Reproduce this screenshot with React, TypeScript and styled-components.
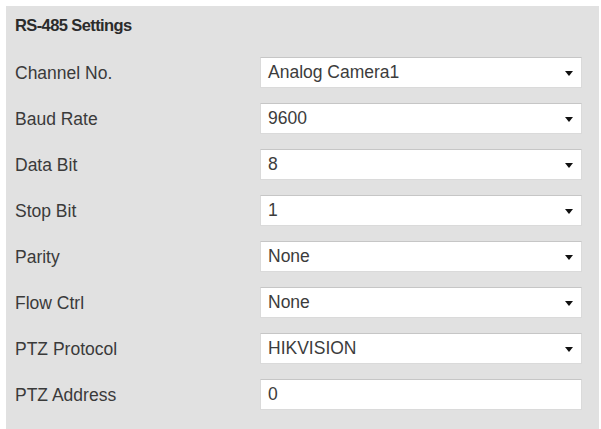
import React from "react";
import styled, { createGlobalStyle } from "styled-components";

const GlobalStyle = createGlobalStyle`
  html, body {
    margin: 0;
    padding: 0;
    background: #ffffff;
  }
  body {
    font-family: "Liberation Sans", Arial, sans-serif;
  }
`;

const Panel = styled.div`
  margin: 6px 2px 0 6px;
  height: 423px;
  box-sizing: border-box;
  padding: 0 0 0 9px;
  background: #e1e1e1;
`;

const Title = styled.div`
  height: 37px;
  line-height: 38px;
  font-size: 16.5px;
  font-weight: bold;
  letter-spacing: -0.6px;
  color: #2b2b2b;
`;

const Form = styled.div`
  margin-top: 14px;
  display: grid;
  grid-template-columns: 245px 322px;
  row-gap: 15px;
`;

const Label = styled.div`
  height: 31px;
  line-height: 33px;
  font-size: 17.5px;
  color: #3a3a3a;
`;

const Field = styled.div`
  position: relative;
  height: 31px;
  box-sizing: border-box;
  background: #ffffff;
  border: 1px solid #dadada;
  border-top-color: #c6c6c6;
  padding: 0 30px 0 7px;
  line-height: 29px;
  font-size: 17.5px;
  color: #3c3c3c;
  white-space: nowrap;
`;

const Arrow = styled.svg`
  position: absolute;
  right: 8px;
  top: 13px;
  width: 8px;
  height: 5px;
`;

type Row = { label: string; value: string; select: boolean };

const rows: Row[] = [
  { label: "Channel No.", value: "Analog Camera1", select: true },
  { label: "Baud Rate", value: "9600", select: true },
  { label: "Data Bit", value: "8", select: true },
  { label: "Stop Bit", value: "1", select: true },
  { label: "Parity", value: "None", select: true },
  { label: "Flow Ctrl", value: "None", select: true },
  { label: "PTZ Protocol", value: "HIKVISION", select: true },
  { label: "PTZ Address", value: "0", select: false },
];

const App: React.FC = () => {
  return (
    <>
      <GlobalStyle />
      <Panel>
        <Title>RS-485 Settings</Title>
        <Form>
          {rows.map((r) => (
            <React.Fragment key={r.label}>
              <Label>{r.label}</Label>
              <Field>
                {r.value}
                {r.select && (
                  <Arrow viewBox="0 0 8 5">
                    <path d="M0 0 L8 0 L4 5 Z" fill="#111" />
                  </Arrow>
                )}
              </Field>
            </React.Fragment>
          ))}
        </Form>
      </Panel>
    </>
  );
};

export default App;
